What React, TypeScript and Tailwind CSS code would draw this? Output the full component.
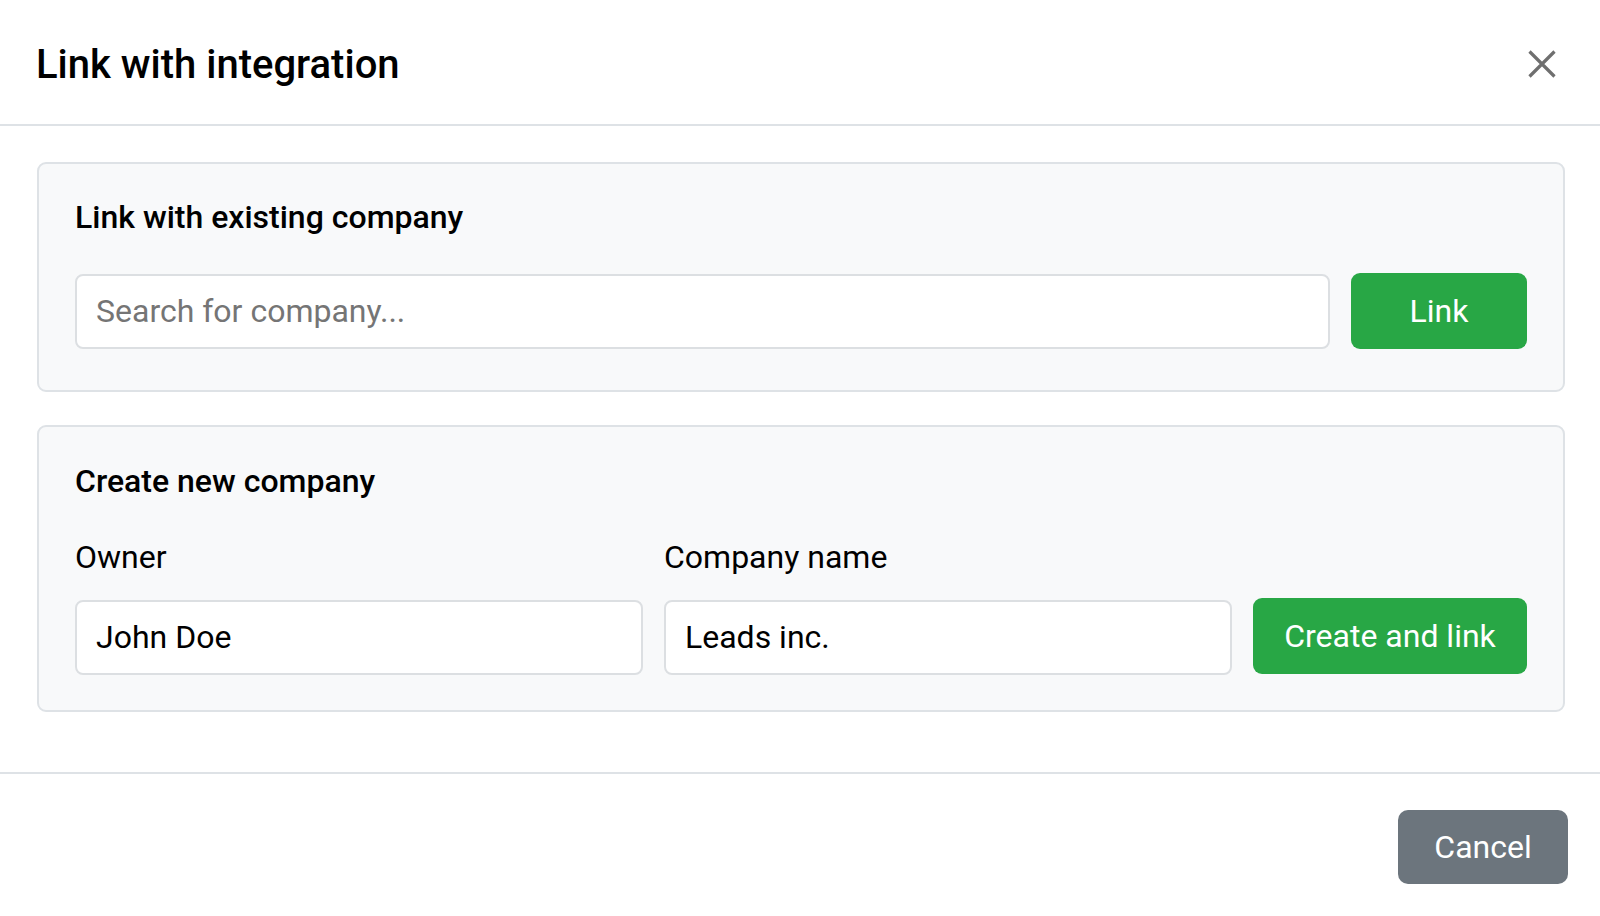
import React from "react";

const inputCls =
  "w-full h-[75px] bg-white border-2 border-[#dcdfe2] rounded-[8px] px-[19px] text-[32px] text-black placeholder:text-[#757575] focus:outline-none";

const greenBtn =
  "h-[76px] shrink-0 rounded-[9px] bg-[#28a745] text-white text-[32px] leading-none flex items-center justify-center";

export default function App() {
  return (
    <div
      className="w-full h-[916px] overflow-hidden bg-white text-black"
      style={{ fontFamily: "Roboto, 'Liberation Sans', sans-serif" }}
    >
      {/* header */}
      <div className="h-[126px] pt-[6px] border-b-2 border-[#dee2e6] flex items-center justify-between pl-[36px] pr-[44px]">
        <h2 className="text-[40px] font-medium leading-[1.2]">Link with integration</h2>
        <button type="button" aria-label="Close" className="w-[28px] h-[28px] flex items-center justify-center -mt-[2px]">
          <svg width="28" height="28" viewBox="0 0 28 28" fill="none">
            <path d="M1.5 1.5L26.5 26.5M26.5 1.5L1.5 26.5" stroke="#6f6f6f" strokeWidth="3.2" />
          </svg>
        </button>
      </div>

      {/* body */}
      <div className="pt-[36px] pb-[60px] pl-[37px] pr-[35px] flex flex-col gap-[33px]">
        <section className="bg-[#f8f9fa] border-2 border-[#dee2e6] rounded-[9px] px-[36px] pt-[34px] pb-[41px]">
          <h3 className="text-[32px] font-medium leading-[1.2] mb-[37px]">Link with existing company</h3>
          <div className="flex items-center gap-[21px]">
            <input type="text" placeholder="Search for company..." className={inputCls} />
            <button type="button" className={`${greenBtn} w-[176px]`}>
              Link
            </button>
          </div>
        </section>

        <section className="bg-[#f8f9fa] border-2 border-[#dee2e6] rounded-[9px] px-[36px] pt-[35px] pb-[35px]">
          <h3 className="text-[32px] font-medium leading-[1.2] mb-[32px]">Create new company</h3>
          <div className="flex items-end gap-[21px]">
            <div className="flex-1 min-w-0">
              <label className="block text-[32px] leading-[1.5] mb-[19px]">Owner</label>
              <input type="text" defaultValue="John Doe" className={inputCls} />
            </div>
            <div className="flex-1 min-w-0">
              <label className="block text-[32px] leading-[1.5] mb-[19px]">Company name</label>
              <input type="text" defaultValue="Leads inc." className={inputCls} />
            </div>
            <button type="button" className={`${greenBtn} w-[274px] mb-[1px]`}>
              Create and link
            </button>
          </div>
        </section>
      </div>

      {/* footer */}
      <div className="border-t-2 border-[#dee2e6] pt-[36px] pr-[32px] flex justify-end">
        <button
          type="button"
          className="h-[74px] w-[170px] rounded-[10px] bg-[#6c757d] text-white text-[32px] leading-none flex items-center justify-center"
        >
          Cancel
        </button>
      </div>
    </div>
  );
}
